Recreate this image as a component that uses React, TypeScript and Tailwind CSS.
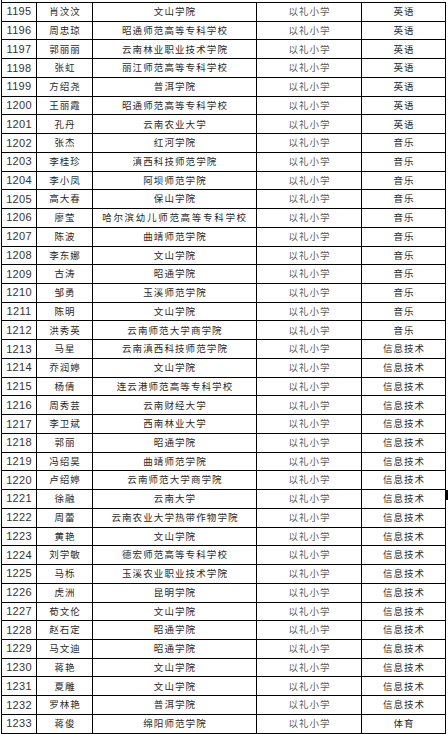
import React from "react";

const rows: [string, string, string, string][] = [
  ["1195", "肖汶汶", "文山学院", "英语"],
  ["1196", "周忠琼", "昭通师范高等专科学校", "英语"],
  ["1197", "郭丽丽", "云南林业职业技术学院", "英语"],
  ["1198", "张虹", "丽江师范高等专科学校", "英语"],
  ["1199", "方绍尧", "普洱学院", "英语"],
  ["1200", "王丽霞", "昭通师范高等专科学校", "英语"],
  ["1201", "孔丹", "云南农业大学", "英语"],
  ["1202", "张杰", "红河学院", "音乐"],
  ["1203", "李桂珍", "滇西科技师范学院", "音乐"],
  ["1204", "李小凤", "阿坝师范学院", "音乐"],
  ["1205", "高大春", "保山学院", "音乐"],
  ["1206", "廖莹", "哈尔滨幼儿师范高等专科学校", "音乐"],
  ["1207", "陈波", "曲靖师范学院", "音乐"],
  ["1208", "李东娜", "文山学院", "音乐"],
  ["1209", "古涛", "昭通学院", "音乐"],
  ["1210", "邹勇", "玉溪师范学院", "音乐"],
  ["1211", "陈明", "文山学院", "音乐"],
  ["1212", "洪秀英", "云南师范大学商学院", "音乐"],
  ["1213", "马星", "云南滇西科技师范学院", "信息技术"],
  ["1214", "乔润婷", "文山学院", "信息技术"],
  ["1215", "杨倩", "连云港师范高等专科学校", "信息技术"],
  ["1216", "周秀芸", "云南财经大学", "信息技术"],
  ["1217", "李卫斌", "西南林业大学", "信息技术"],
  ["1218", "郭丽", "昭通学院", "信息技术"],
  ["1219", "冯绍昊", "曲靖师范学院", "信息技术"],
  ["1220", "卢绍婷", "云南师范大学商学院", "信息技术"],
  ["1221", "徐融", "云南大学", "信息技术"],
  ["1222", "周蕾", "云南农业大学热带作物学院", "信息技术"],
  ["1223", "黄艳", "文山学院", "信息技术"],
  ["1224", "刘学敏", "德宏师范高等专科学校", "信息技术"],
  ["1225", "马栎", "玉溪农业职业技术学院", "信息技术"],
  ["1226", "虎洲", "昆明学院", "信息技术"],
  ["1227", "荀文伦", "文山学院", "信息技术"],
  ["1228", "赵石定", "昭通学院", "信息技术"],
  ["1229", "马文迪", "昭通学院", "信息技术"],
  ["1230", "蒋艳", "文山学院", "信息技术"],
  ["1231", "夏雕", "文山学院", "信息技术"],
  ["1232", "罗林艳", "普洱学院", "信息技术"],
  ["1233", "蒋俊", "绵阳师范学院", "体育"],
];

const cjk = "font-['SimSun','Noto_Sans_CJK_SC',sans-serif]";
const cell = "flex items-center justify-center border-r border-b border-black leading-none whitespace-nowrap";

export default function App() {
  return (
    <div className="relative w-[448px] h-[734px] bg-white overflow-hidden">
      <div className="ml-px h-[2px] border-l border-black" />
      <div className="ml-px grid grid-cols-[35px_56px_164px_105px_84px] auto-rows-[18.74px] border-l border-t border-black w-[445px]">
        {rows.map((r) => (
          <React.Fragment key={r[0]}>
            <div className={`${cell} text-[11px] text-[#333] font-['Liberation_Sans',sans-serif] tracking-[0.3px]`}>
              {r[0]}
            </div>
            <div className={`${cell} text-[9.5px] text-[#2a2a2a] ${cjk} tracking-[1px] pl-[1px]`}>
              {r[1]}
            </div>
            <div
              className={`${cell} text-[9.5px] text-[#2a2a2a] ${cjk} pl-[1px] ${
                r[2].length > 12 ? "tracking-[1.7px]" : "tracking-[1.1px]"
              }`}
            >
              {r[2]}
            </div>
            <div className={`${cell} text-[9.5px] text-[#5a5a5a] ${cjk} tracking-[1px] pl-[1px]`}>
              以礼小学
            </div>
            <div className={`${cell} text-[9.5px] text-[#2a2a2a] ${cjk} tracking-[1px] pl-[1px]`}>
              {r[3]}
            </div>
          </React.Fragment>
        ))}
      </div>
      <div className="absolute left-[446px] top-[490px] w-[2px] h-[10px] bg-black" />
    </div>
  );
}
